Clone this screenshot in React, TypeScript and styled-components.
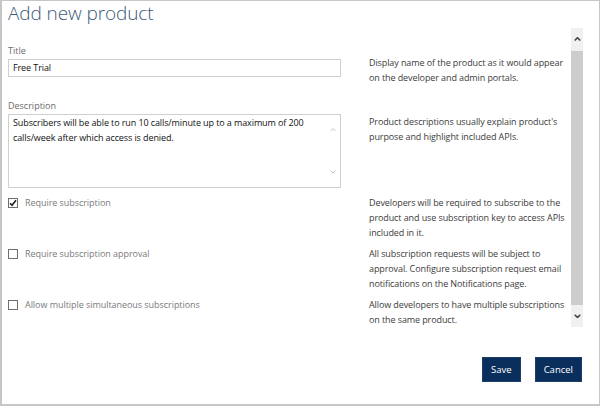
import React from 'react';
import styled, { createGlobalStyle } from 'styled-components';

const Global = createGlobalStyle`
  html, body { margin: 0; padding: 0; background: #fff; }
  body { font-family: "Open Sans", "Noto Sans", sans-serif; }
  * { box-sizing: border-box; }
`;

const Frame = styled.div`
  width: 600px;
  height: 406px;
  border: 1px solid #c6c6c6;
  border-left-width: 2px;
  border-bottom-width: 2px;
  display: flex;
  flex-direction: column;
  background: #fff;
  overflow: hidden;
`;

const Heading = styled.h1`
  margin: 0;
  padding: 0 0 0 6px;
  height: 27px;
  font-family: "Open Sans", sans-serif;
  font-weight: 300;
  font-size: 19px;
  line-height: 24px;
  letter-spacing: -0.1px;
  color: #3b5a7a;
  white-space: nowrap;
`;

const Body = styled.div`
  display: flex;
  height: 299px;
`;

const FormArea = styled.div`
  flex: 1;
  padding: 16px 0 0 6px;
  overflow: hidden;
  display: flex;
  flex-direction: column;
`;

const Row = styled.div<{ $mt?: number }>`
  display: grid;
  grid-template-columns: 333px 201px;
  column-gap: 28px;
  align-items: start;
  margin-top: ${p => p.$mt ?? 0}px;
`;

const Field = styled.div`
  display: flex;
  flex-direction: column;
`;

const Label = styled.div`
  font-size: 9px;
  line-height: 14px;
  color: #6a6a6a;
  margin-bottom: 1px;
`;

const Input = styled.div`
  height: 18px;
  border: 1px solid #cfcfcf;
  padding: 0 4px;
  font-size: 9px;
  line-height: 16px;
  letter-spacing: -0.1px;
  color: #111;
`;

const TextBox = styled.div`
  height: 74px;
  border: 1px solid #cfcfcf;
  display: flex;
`;

const TextContent = styled.div`
  flex: 1;
  padding: 0 4px;
  font-size: 9px;
  line-height: 15px;
  letter-spacing: -0.1px;
  color: #111;
`;

const InnerScroll = styled.div`
  width: 14px;
  padding: 13px 0 13px;
  display: flex;
  flex-direction: column;
  justify-content: space-between;
  align-items: center;
  color: #b9b9b9;
`;

const Hint = styled.p<{ $pt?: number; $mb?: number }>`
  margin: 0 0 ${p => p.$mb ?? 6}px;
  padding-top: ${p => p.$pt ?? 0}px;
  font-size: 9px;
  line-height: 15px;
  letter-spacing: -0.1px;
  color: #3c3c3c;
`;

const CheckLine = styled.label`
  display: flex;
  align-items: center;
  gap: 7px;
  height: 15px;
  font-size: 9px;
  letter-spacing: -0.05px;
  color: #7a7a7a;
`;

const Box = styled.span`
  width: 10px;
  height: 10px;
  border: 1px solid #6f6f6f;
  display: flex;
  align-items: center;
  justify-content: center;
  background: #fff;
`;

const Scrollbar = styled.div`
  width: 12px;
  margin-right: 16px;
  background: #f0f0f0;
  display: flex;
  flex-direction: column;
`;

const ArrowCell = styled.div<{ $h: number }>`
  height: ${p => p.$h}px;
  display: flex;
  align-items: center;
  justify-content: center;
  color: #444;
`;

const Thumb = styled.div`
  flex: 1;
  background: #cdcdcd;
`;

const Footer = styled.div`
  display: flex;
  justify-content: flex-end;
  gap: 14px;
  padding: 30px 17px 0 0;
`;

const Button = styled.button`
  height: 25px;
  padding: 0 8px;
  border: 1px solid #1c3e69;
  background: #0b2f5c;
  color: #fff;
  font-family: "Open Sans", sans-serif;
  font-size: 9.5px;
  cursor: pointer;
`;

const Chevron = ({ up, size = 7, w = 1.6 }: { up?: boolean; size?: number; w?: number }) => (
  <svg width={size} height={size * 0.6} viewBox="0 0 10 6">
    <path
      d={up ? 'M1 5 L5 1 L9 5' : 'M1 1 L5 5 L9 1'}
      fill="none"
      stroke="currentColor"
      strokeWidth={w * 10 / size}
    />
  </svg>
);

const CheckMark = () => (
  <svg width="8" height="8" viewBox="0 0 8 8">
    <path d="M1 4.2 L3 6.3 L7 1.2" fill="none" stroke="#222" strokeWidth="1.6" />
  </svg>
);

const Checkbox = ({ checked, children }: { checked?: boolean; children: React.ReactNode }) => (
  <CheckLine>
    <Box>{checked && <CheckMark />}</Box>
    {children}
  </CheckLine>
);

export default function App() {
  return (
    <>
      <Global />
      <Frame>
        <Heading>Add new product</Heading>
        <Body>
          <FormArea>
            <Row>
              <Field>
                <Label>Title</Label>
                <Input>Free Trial</Input>
              </Field>
              <Hint $pt={11} $mb={0}>Display name of the product as it would appear on the developer and admin portals.</Hint>
            </Row>
            <Row $mt={14}>
              <Field>
                <Label>Description</Label>
                <TextBox>
                  <TextContent>
                    Subscribers will be able to run 10 calls/minute up to a maximum of 200 calls/week after which access is denied.
                  </TextContent>
                  <InnerScroll>
                    <Chevron up size={6} w={0.9} />
                    <Chevron size={6} w={0.9} />
                  </InnerScroll>
                </TextBox>
              </Field>
              <Hint $pt={15} $mb={0}>Product descriptions usually explain product's purpose and highlight included APIs.</Hint>
            </Row>
            <Row $mt={7}>
              <Checkbox checked>Require subscription</Checkbox>
              <Hint>Developers will be required to subscribe to the product and use subscription key to access APIs included in it.</Hint>
            </Row>
            <Row>
              <Checkbox>Require subscription approval</Checkbox>
              <Hint>All subscription requests will be subject to approval. Configure subscription request email notifications on the Notifications page.</Hint>
            </Row>
            <Row>
              <Checkbox>Allow multiple simultaneous subscriptions</Checkbox>
              <Hint>Allow developers to have multiple subscriptions on the same product.</Hint>
            </Row>
          </FormArea>
          <Scrollbar>
            <ArrowCell $h={23}><Chevron up /></ArrowCell>
            <Thumb />
            <ArrowCell $h={22}><Chevron /></ArrowCell>
          </Scrollbar>
        </Body>
        <Footer>
          <Button>Save</Button>
          <Button>Cancel</Button>
        </Footer>
      </Frame>
    </>
  );
}
